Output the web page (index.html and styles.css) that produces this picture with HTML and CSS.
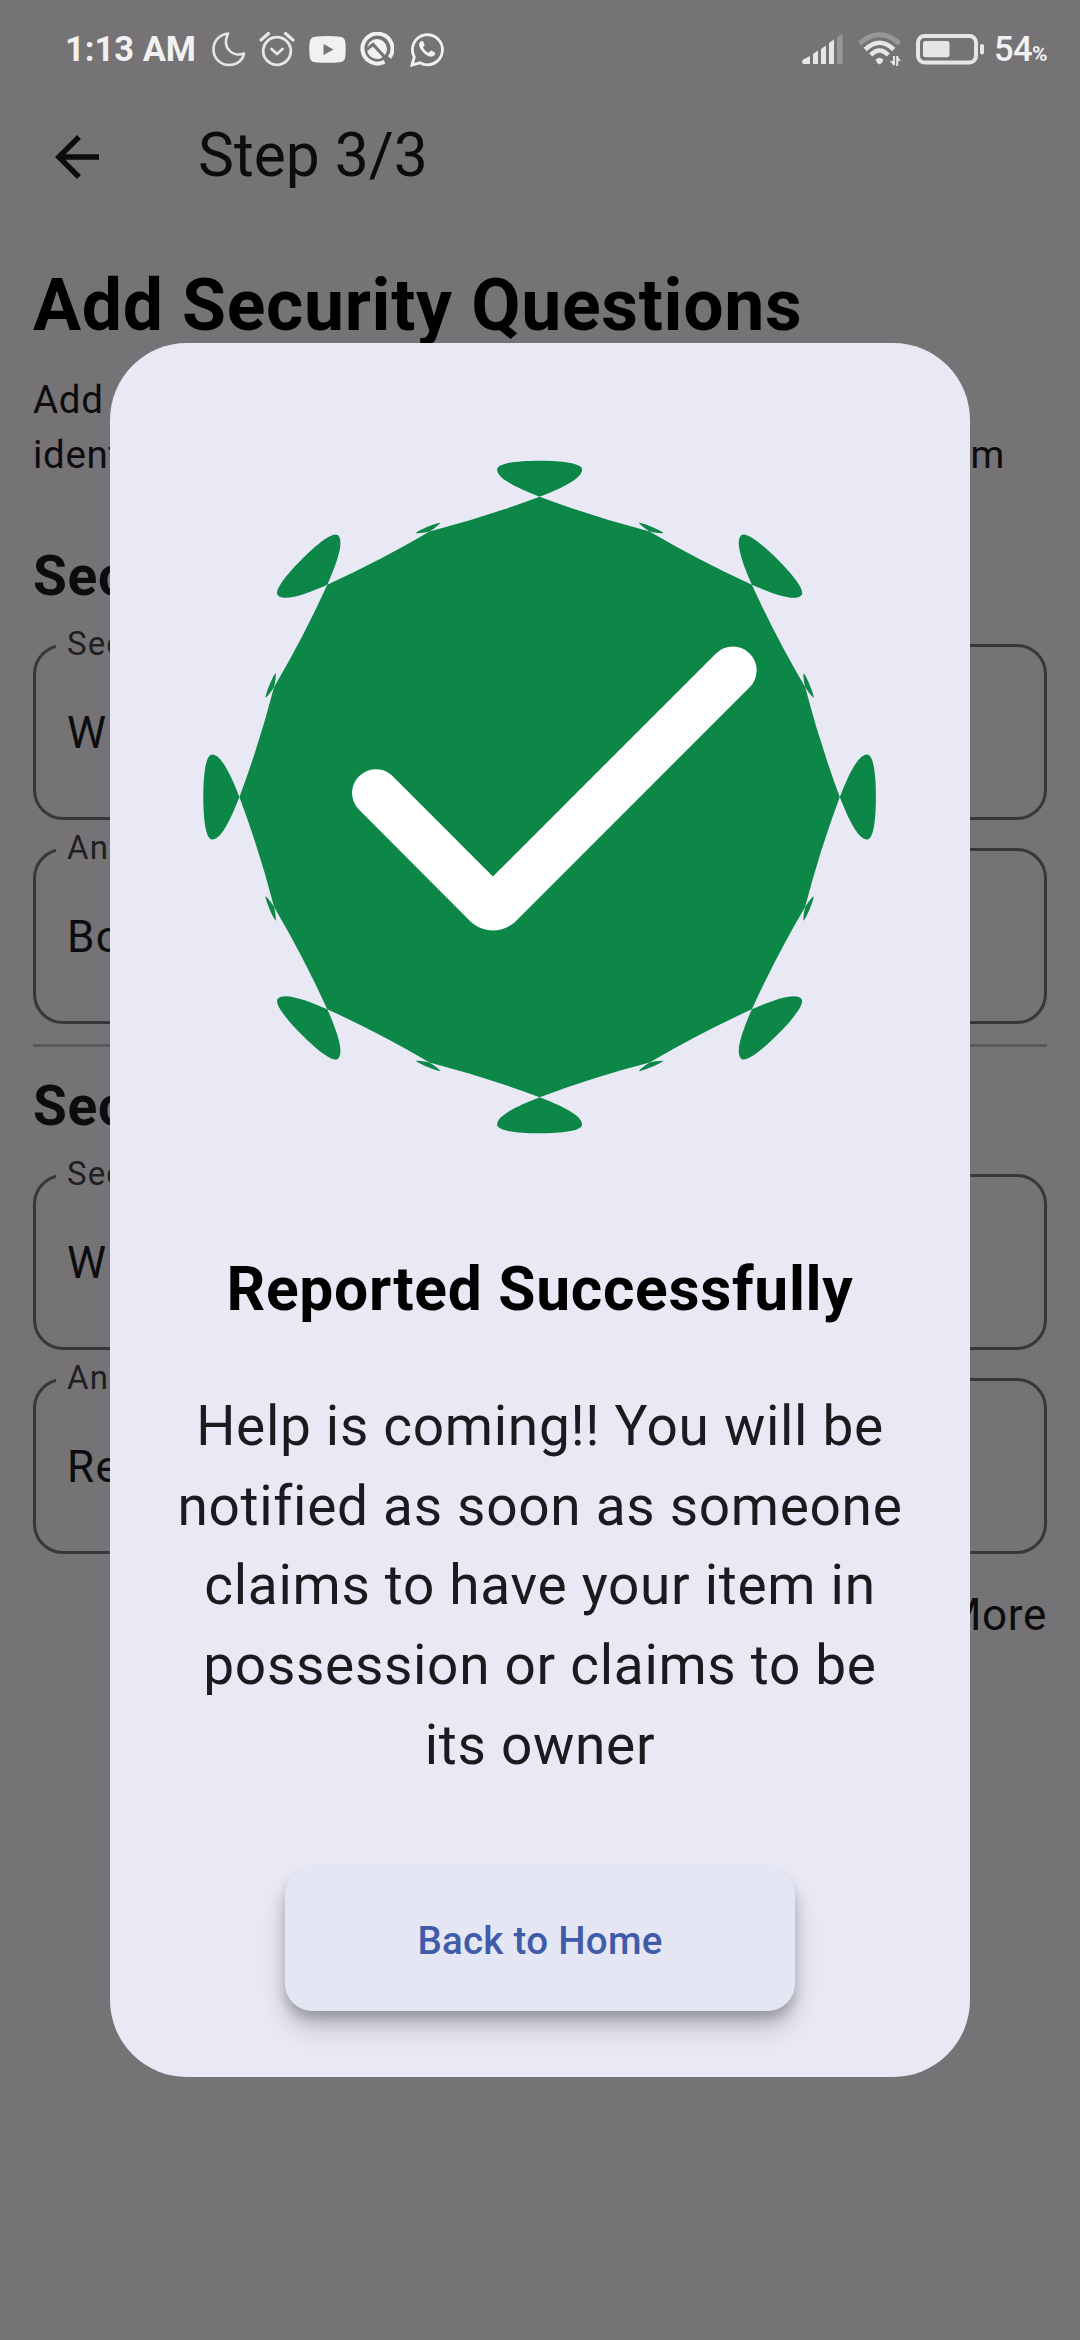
FILE: index.html
```html
<!DOCTYPE html>
<html lang="en">
<head>
<meta charset="utf-8">
<title>Step 3/3</title>
<link rel="stylesheet" href="styles.css">
</head>
<body>
<div class="screen">
  <header class="status">
    <span class="clock">1:13 AM</span>
    <div class="status-left">
      <svg class="ic-moon" width="34" height="36" viewBox="0 0 34 36"><path d="M16 2.500C6 4 1.500 11 1.500 18.500C1.500 27 8 34 17 34C25 34 31 29 32 22.500C22 26.500 9 18 16 2.500Z" fill="none" stroke="#e6e6e6" stroke-width="2.600" stroke-linejoin="round"/></svg>
      <svg class="ic-alarm" width="36" height="36" viewBox="0 0 36 36"><g fill="none" stroke="#e6e6e6" stroke-linecap="round" stroke-linejoin="round"><circle cx="18" cy="20" r="13.800" stroke-width="2.800"/><path d="M2 9L9.500 2.500M34 9L26.500 2.500" stroke-width="3.200"/><path d="M12.500 18L18 23L23.500 18" stroke-width="2.800"/></g></svg>
      <svg class="ic-tube" width="37" height="27" viewBox="0 0 37 27"><path fill-rule="evenodd" fill="#f1f1f1" d="M6 .8Q18.500-.6 31 .8Q36 1 36.400 7Q37 13.500 36.400 20Q36 26 31 26.200Q18.500 27.400 6 26.200Q1 26 .6 20Q0 13.500.6 7Q1 1 6 .8ZM14.500 8V19L24.500 13.500Z"/></svg>
      <svg class="ic-lens" width="34" height="34" viewBox="0 0 34 34"><path d="M24.500 29.800A15 15 0 1 1 29.500 25.500" fill="none" stroke="#f1f1f1" stroke-width="4"/><circle cx="17" cy="17" r="10" fill="#f1f1f1"/><path d="M6.500 17.500L13 12.500L26 26.500" fill="none" stroke="#757376" stroke-width="3.200"/><path d="M9 21.500L13.500 18.500L20.500 26" fill="none" stroke="#f1f1f1" stroke-width="4"/></svg>
      <svg class="ic-chat" width="34" height="35" viewBox="0 0 34 35"><path d="M2 33L4.300 25A15 15 0 1 1 10 30.800Z" fill="none" stroke="#f1f1f1" stroke-width="2.800"/><path d="M11.500 9C8 11 8.500 15 12.500 19.500C17 24.500 22 26.500 25 22.500L25 20.500L21 18.500L18.500 20.700C16 19.500 14 17.500 13 15.200L14.700 13.200L13 9Z" fill="#f1f1f1"/></svg>
    </div>
    <div class="status-right">
      <svg width="41" height="30" viewBox="0 0 41 30"><path fill="#e6e6e6" d="M0 28Q0 26 2 25L8 22V30H2Q0 30 0 28ZM11 20L16 16.500V30H11ZM19 15L24 11.500V30H19ZM27 9L32 5.500V30H27Z"/><path fill="#989699" d="M35 4Q37 1 40.500 0V30H35Z"/></svg>
      <svg width="43" height="34" viewBox="0 0 43 34"><g fill="none"><path d="M1.500 11.500Q21.500-6 41.500 11.500" stroke="#989699" stroke-width="5"/><path d="M7.200 17.500Q21.500 4 35.800 17.500M12.700 23Q21.500 14 30.300 23" stroke="#e6e6e6" stroke-width="4.500"/></g><path d="M17.500 28Q21.500 23.500 25.500 28Q24 31.500 21.500 32.500Q19 31.500 17.500 28Z" fill="#e6e6e6"/><path d="M36 24V33M39.200 34V24" stroke="#e6e6e6" stroke-width="2"/><path d="M32 29H36V34ZM43 29H39V24Z" fill="#e6e6e6"/></svg>
      <svg width="70" height="32" viewBox="0 0 70 32"><rect x="2" y="3" width="58" height="26.500" rx="6.500" fill="none" stroke="#e6e6e6" stroke-width="4"/><rect x="7" y="8" width="26.500" height="16.300" rx="2.500" fill="#e6e6e6"/><rect x="64" y="11" width="4" height="10.500" rx="2" fill="#e6e6e6"/></svg>
      <span class="level">54<small>%</small></span>
    </div>
  </header>

  <div class="appbar">
    <svg class="back" width="66" height="66" viewBox="0 0 24 24"><path fill="#0c0c0e" d="M20 11H7.830l5.590-5.590L12 4l-8 8 8 8 1.410-1.410L7.830 13H20z"/></svg>
    <span class="step">Step 3/3</span>
  </div>

  <main class="form">
    <h1>Add Security Questions</h1>
    <p class="intro">Add security questions to help us verify the <span class="fill">identity of whoever claims to own the found item</span></p>

    <h2>Security Question 1</h2>
    <div class="field"><span class="label">Security Question</span><span>What is the name of the pet</span></div>
    <div class="field"><span class="label">Answer</span><span>Bobby</span></div>
    <hr>
    <h2>Security Question 2</h2>
    <div class="field"><span class="label">Security Question</span><span>What is the colour of the tag</span></div>
    <div class="field"><span class="label">Answer</span><span>Red</span></div>
    <div class="more">Add More</div>
  </main>

  <section class="dialog" role="dialog">
    <svg class="badge" width="680" height="680" viewBox="-340 -340 680 680">
      <defs>
        <path id="petal" d="M0-300.200C20-308 42.500-318 42.500-327.500C42.500-334 22-336.300 0-336.300S-42.500-334-42.500-327.500C-42.500-318-20-308 0-300.200Z"/>
        <path id="leaf" d="M0-287.400C6-288.500 12-290 13.200-291.300C9-292.800-9-292.800-13.200-291.300C-12-290-6-288.500 0-287.400Z"/>
      </defs>
      <g fill="#0c8748" transform="translate(-.4 0)">
        <path d="M0-300.200Q54-280 110-265.500Q159.800-236.200 212.300-212.300Q236.200-159.800 265.500-110Q280-54 300.200 0Q280 54 265.500 110Q236.200 159.800 212.300 212.300Q159.800 236.200 110 265.500Q54 280 0 300.200Q-54 280-110 265.500Q-159.800 236.200-212.300 212.300Q-236.200 159.800-265.500 110Q-280 54-300.200 0Q-280-54-265.500-110Q-236.200-159.800-212.300-212.300Q-159.800-236.200-110-265.500Q-54-280 0-300.200Z"/>
        <use href="#petal"/><use href="#petal" transform="rotate(45)"/><use href="#petal" transform="rotate(90)"/><use href="#petal" transform="rotate(135)"/><use href="#petal" transform="rotate(180)"/><use href="#petal" transform="rotate(225)"/><use href="#petal" transform="rotate(270)"/><use href="#petal" transform="rotate(315)"/>
        <use href="#leaf" transform="rotate(22.500)"/><use href="#leaf" transform="rotate(67.500)"/><use href="#leaf" transform="rotate(112.500)"/><use href="#leaf" transform="rotate(157.500)"/><use href="#leaf" transform="rotate(202.500)"/><use href="#leaf" transform="rotate(247.500)"/><use href="#leaf" transform="rotate(292.500)"/><use href="#leaf" transform="rotate(337.500)"/>
      </g>
      <path fill="#fff" transform="translate(-540 -796.500)" d="M391.700 774.700L492.900 876L716 653A23.800 23.800 0 0 1 749.700 686.700L516 920.500C503.500 933 482.500 933 470 920.500L358.100 808.300A23.800 23.800 0 0 1 391.700 774.700Z"/>
    </svg>
    <h3>Reported Successfully</h3>
    <p class="message">Help is coming!! You will be notified as soon as someone claims to have your item in possession or claims to be its owner</p>
    <button class="home">Back to Home</button>
  </section>
</div>
</body>
</html>
```

FILE: styles.css
```css
* { box-sizing: border-box; }

body {
  margin: 0;
  background: #757376;
  color: #0c0c0e;
  font-family: Roboto, "Noto Sans", sans-serif;
}

.screen {
  position: relative;
  width: 1080px;
  height: 2340px;
  overflow: hidden;
}

h1, h2, h3, p { margin: 0; }

/* Status bar */
.status {
  display: flex;
  height: 77px;
  padding: 0 34px 0 65px;
  color: #f1f1f1;
}

.clock {
  width: 147px;
  font-size: 34.5px;
  font-weight: 700;
  line-height: 99px;
  white-space: nowrap;
}

.status-left,
.status-right {
  display: flex;
  align-items: center;
  height: 98px;
}

.ic-alarm { margin-left: 13px; }
.ic-tube { margin-left: 14px; }
.ic-lens { margin-left: 14px; }
.ic-chat { margin-left: 16px; }

.status-right {
  gap: 15px;
  margin-left: auto;
}

.level {
  width: 52px;
  margin-left: -7px;
  font-size: 34.5px;
  font-weight: 500;
  letter-spacing: -0.6px;
  white-space: nowrap;
}

.level small {
  font-size: 21px;
  font-weight: 700;
}

/* App bar */
.appbar {
  display: flex;
  align-items: center;
  height: 160px;
  padding-left: 44px;
}

.step {
  margin-left: 88px;
  padding-bottom: 3.5px;
  font-size: 60.5px;
}

/* Form */
.form {
  display: flex;
  flex-direction: column;
  padding: 27px 33px 0;
}

h1 {
  color: #000;
  font-size: 71.5px;
  letter-spacing: 0.6875px;
  line-height: 84px;
  white-space: nowrap;
}

.intro {
  margin-top: 24.3px;
  font-size: 38.5px;
  letter-spacing: 0.6875px;
  line-height: 55px;
}

.fill {
  display: block;
  width: 972px;
  height: 55px;
  text-align: justify;
  text-align-last: justify;
}

h2 {
  margin-top: 60.7px;
  font-size: 55px;
  letter-spacing: 0.6875px;
  line-height: 66px;
}

.field {
  position: relative;
  display: flex;
  align-items: center;
  height: 176px;
  margin-top: 27.7px;
  padding: 2px 0 0 31px;
  border: 3px solid #38383b;
  border-radius: 30px;
  font-size: 44px;
  letter-spacing: 1.375px;
  white-space: nowrap;
}

h2 + .field { margin-top: 35.3px; }

.label {
  position: absolute;
  top: -23px;
  left: 20px;
  padding: 0 11px;
  background: #757376;
  color: #1f1f22;
  font-size: 33px;
  letter-spacing: 1.1px;
  line-height: 40px;
}

hr {
  width: 100%;
  height: 3px;
  margin: 19.6px 0 0;
  border: 0;
  background: #59595b;
}

hr + h2 { margin-top: 26px; }

.more {
  margin-top: 35px;
  font-size: 44px;
  letter-spacing: 0.6875px;
  line-height: 52px;
  text-align: right;
}

/* Dialog */
.dialog {
  position: absolute;
  top: 342.7px;
  left: 110px;
  display: flex;
  flex-direction: column;
  align-items: center;
  width: 860px;
  height: 1734.6px;
  padding: 114.3px 66px 66px;
  border-radius: 77px;
  background: #e9e9f5;
}

.badge { flex: none; }

h3 {
  margin-top: 113.2px;
  color: #000;
  font-size: 60.5px;
  letter-spacing: 0.6875px;
  line-height: 80px;
  white-space: nowrap;
}

.message {
  margin-top: 56.7px;
  color: #1b1b1f;
  font-size: 55px;
  letter-spacing: 0.6875px;
  line-height: 79.75px;
  text-align: center;
}

.home {
  width: 510px;
  height: 143px;
  margin-top: 82.3px;
  padding: 2px 0 0;
  border: 0;
  border-radius: 27.5px;
  background: #e4e6f4;
  box-shadow: 0 8px 12px rgba(0, 0, 0, 0.2), 0 18px 28px -2px rgba(0, 0, 0, 0.2);
  color: #3f5ba9;
  font: 500 38.5px Roboto, "Noto Sans", sans-serif;
  letter-spacing: 0.275px;
}
```
